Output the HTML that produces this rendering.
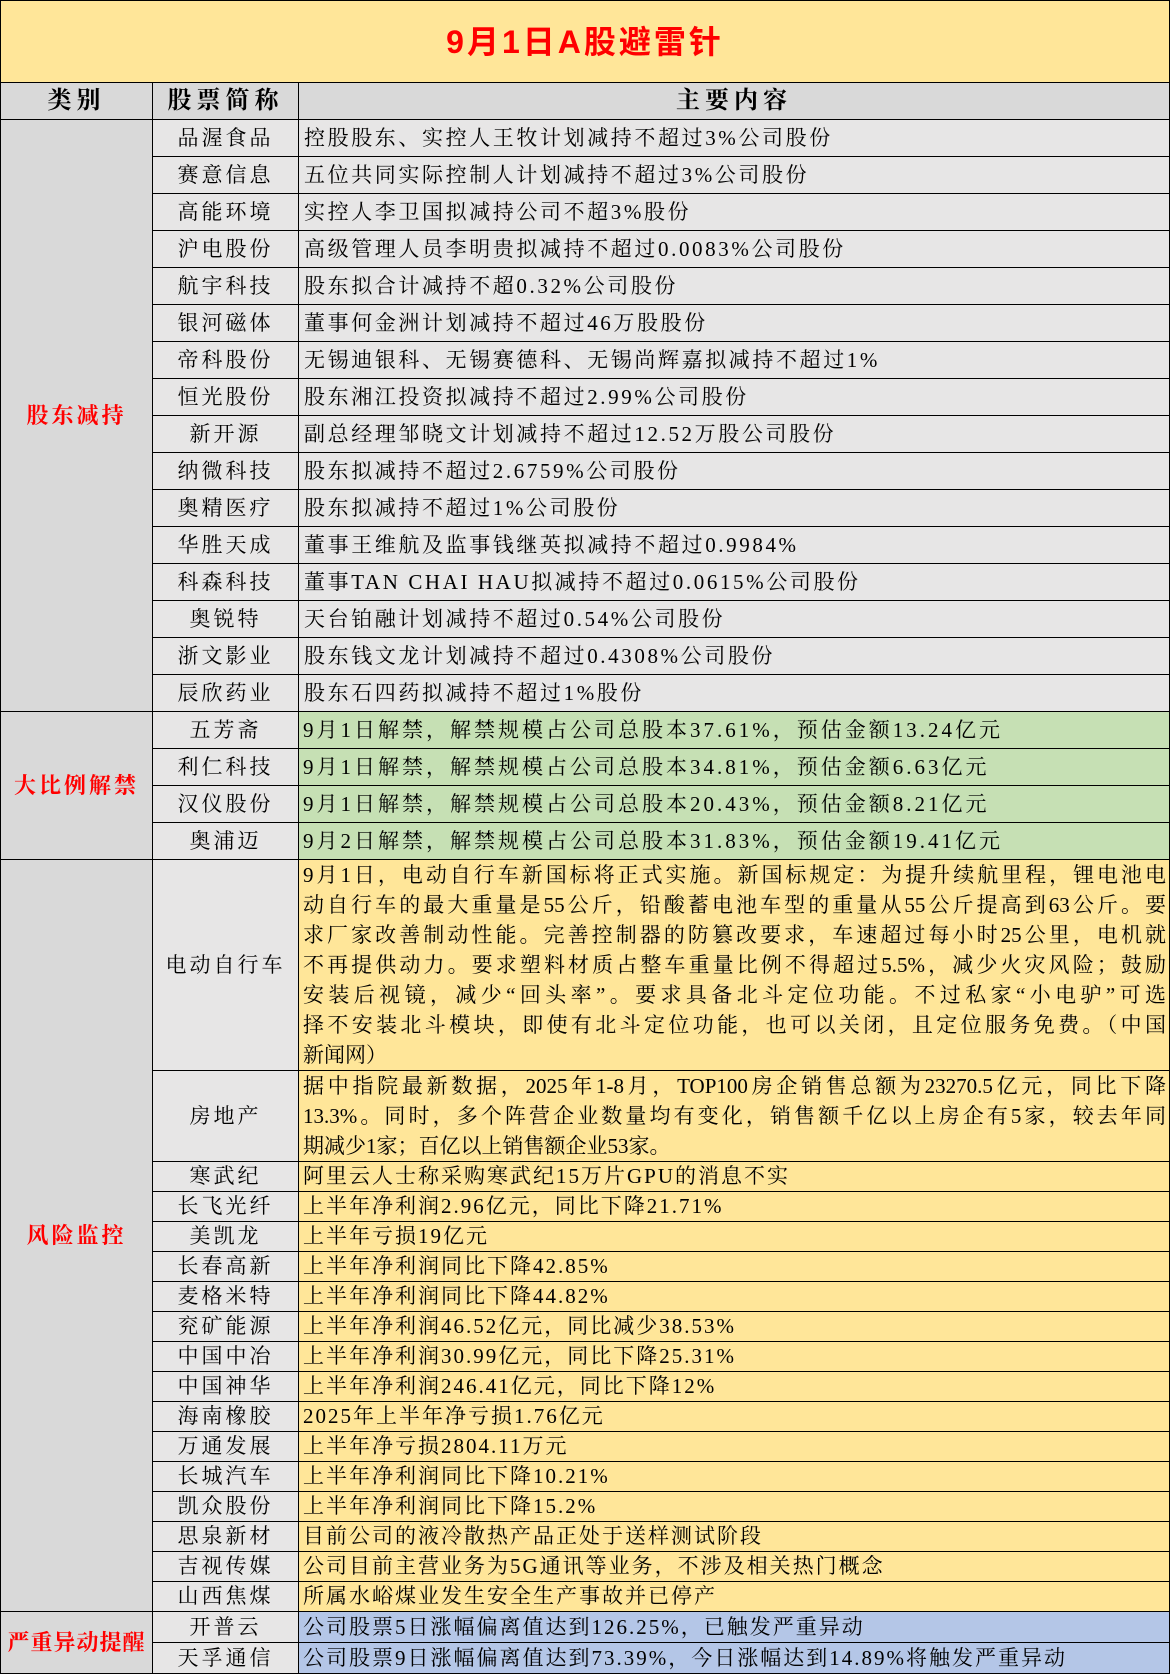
<!DOCTYPE html>
<html><head><meta charset="utf-8"><style>
body{margin:0;width:1170px;height:1672px;overflow:hidden;background:#fff;font-family:"Liberation Serif","Noto Serif CJK SC",serif;}
table{border-collapse:collapse;table-layout:fixed;width:1170px;}
td{border:1.5px solid #000;padding:0;font-size:21px;color:#000;overflow:hidden;white-space:nowrap;line-height:1;}
.t{background:#FFE699;color:#FF0000;font-weight:bold;text-align:center;font-size:32px;letter-spacing:3px;font-family:"Liberation Sans","Noto Sans CJK SC",sans-serif;}
.h{background:#D9D9D9;font-weight:bold;text-align:center;font-size:24px;letter-spacing:5px;}
.c{background:#D9D9D9;color:#FF0000;font-weight:bold;text-align:center;font-size:22px;letter-spacing:3px;}
.n{background:#E7E6E6;text-align:center;letter-spacing:3px;}
.g{background:#E7E6E6;padding-left:5px;letter-spacing:2.6px;}
.gr{background:#C6E0B4;padding-left:4px;letter-spacing:3px;}
.y{background:#FFE699;padding-left:4px;letter-spacing:2px;}
.b{background:#B4C6E7;padding-left:4px;letter-spacing:2px;}
.p{vertical-align:top;padding:0 3px 0 4px;letter-spacing:0;}
.p div{height:30px;line-height:30px;text-align:justify;text-align-last:justify;white-space:nowrap;}
.p div.l{text-align-last:left;}
.r1 td{height:36px}
.r2 td{height:29px}
.r3 td{height:30px}
</style></head><body>
<table>
<colgroup><col style="width:152px"><col style="width:146px"><col></colgroup>
<tr><td colspan="3" class="t" style="height:81px">9月1日A股避雷针</td></tr>
<tr><td class="h" style="height:36px">类别</td><td class="h">股票简称</td><td class="h">主要内容</td></tr>
<tr class="r1"><td class="c" rowspan="16">股东减持</td><td class="n">品渥食品</td><td class="g">控股股东、实控人王牧计划减持不超过3%公司股份</td></tr>
<tr class="r1"><td class="n">赛意信息</td><td class="g">五位共同实际控制人计划减持不超过3%公司股份</td></tr>
<tr class="r1"><td class="n">高能环境</td><td class="g">实控人李卫国拟减持公司不超3%股份</td></tr>
<tr class="r1"><td class="n">沪电股份</td><td class="g">高级管理人员李明贵拟减持不超过0.0083%公司股份</td></tr>
<tr class="r1"><td class="n">航宇科技</td><td class="g">股东拟合计减持不超0.32%公司股份</td></tr>
<tr class="r1"><td class="n">银河磁体</td><td class="g">董事何金洲计划减持不超过46万股股份</td></tr>
<tr class="r1"><td class="n">帝科股份</td><td class="g">无锡迪银科、无锡赛德科、无锡尚辉嘉拟减持不超过1%</td></tr>
<tr class="r1"><td class="n">恒光股份</td><td class="g">股东湘江投资拟减持不超过2.99%公司股份</td></tr>
<tr class="r1"><td class="n">新开源</td><td class="g">副总经理邹晓文计划减持不超过12.52万股公司股份</td></tr>
<tr class="r1"><td class="n">纳微科技</td><td class="g">股东拟减持不超过2.6759%公司股份</td></tr>
<tr class="r1"><td class="n">奥精医疗</td><td class="g">股东拟减持不超过1%公司股份</td></tr>
<tr class="r1"><td class="n">华胜天成</td><td class="g">董事王维航及监事钱继英拟减持不超过0.9984%</td></tr>
<tr class="r1"><td class="n">科森科技</td><td class="g">董事TAN CHAI HAU拟减持不超过0.0615%公司股份</td></tr>
<tr class="r1"><td class="n">奥锐特</td><td class="g">天台铂融计划减持不超过0.54%公司股份</td></tr>
<tr class="r1"><td class="n">浙文影业</td><td class="g">股东钱文龙计划减持不超过0.4308%公司股份</td></tr>
<tr class="r1"><td class="n">辰欣药业</td><td class="g">股东石四药拟减持不超过1%股份</td></tr>
<tr class="r1"><td class="c" rowspan="4">大比例解禁</td><td class="n">五芳斋</td><td class="gr">9月1日解禁，解禁规模占公司总股本37.61%，预估金额13.24亿元</td></tr>
<tr class="r1"><td class="n">利仁科技</td><td class="gr">9月1日解禁，解禁规模占公司总股本34.81%，预估金额6.63亿元</td></tr>
<tr class="r1"><td class="n">汉仪股份</td><td class="gr">9月1日解禁，解禁规模占公司总股本20.43%，预估金额8.21亿元</td></tr>
<tr class="r1"><td class="n">奥浦迈</td><td class="gr">9月2日解禁，解禁规模占公司总股本31.83%，预估金额19.41亿元</td></tr>
<tr><td class="c" rowspan="17">风险监控</td><td class="n" style="height:209px">电动自行车</td><td class="y p">
<div>9月1日，电动自行车新国标将正式实施。新国标规定：为提升续航里程，锂电池电</div>
<div>动自行车的最大重量是55公斤，铅酸蓄电池车型的重量从55公斤提高到63公斤。要</div>
<div>求厂家改善制动性能。完善控制器的防篡改要求，车速超过每小时25公里，电机就</div>
<div>不再提供动力。要求塑料材质占整车重量比例不得超过5.5%，减少火灾风险；鼓励</div>
<div>安装后视镜，减少“回头率”。要求具备北斗定位功能。不过私家“小电驴”可选</div>
<div>择不安装北斗模块，即使有北斗定位功能，也可以关闭，且定位服务免费。（中国</div>
<div class="l">新闻网）</div></td></tr>
<tr><td class="n" style="height:88px">房地产</td><td class="y p">
<div>据中指院最新数据，2025年1-8月，TOP100房企销售总额为23270.5亿元，同比下降</div>
<div>13.3%。同时，多个阵营企业数量均有变化，销售额千亿以上房企有5家，较去年同</div>
<div class="l">期减少1家；百亿以上销售额企业53家。</div></td></tr>
<tr class="r2"><td class="n">寒武纪</td><td class="y">阿里云人士称采购寒武纪15万片GPU的消息不实</td></tr>
<tr class="r2"><td class="n">长飞光纤</td><td class="y">上半年净利润2.96亿元，同比下降21.71%</td></tr>
<tr class="r2"><td class="n">美凯龙</td><td class="y">上半年亏损19亿元</td></tr>
<tr class="r2"><td class="n">长春高新</td><td class="y">上半年净利润同比下降42.85%</td></tr>
<tr class="r2"><td class="n">麦格米特</td><td class="y">上半年净利润同比下降44.82%</td></tr>
<tr class="r2"><td class="n">兖矿能源</td><td class="y">上半年净利润46.52亿元，同比减少38.53%</td></tr>
<tr class="r2"><td class="n">中国中冶</td><td class="y">上半年净利润30.99亿元，同比下降25.31%</td></tr>
<tr class="r2"><td class="n">中国神华</td><td class="y">上半年净利润246.41亿元，同比下降12%</td></tr>
<tr class="r2"><td class="n">海南橡胶</td><td class="y">2025年上半年净亏损1.76亿元</td></tr>
<tr class="r2"><td class="n">万通发展</td><td class="y">上半年净亏损2804.11万元</td></tr>
<tr class="r2"><td class="n">长城汽车</td><td class="y">上半年净利润同比下降10.21%</td></tr>
<tr class="r2"><td class="n">凯众股份</td><td class="y">上半年净利润同比下降15.2%</td></tr>
<tr class="r2"><td class="n">思泉新材</td><td class="y">目前公司的液冷散热产品正处于送样测试阶段</td></tr>
<tr class="r2"><td class="n">吉视传媒</td><td class="y">公司目前主营业务为5G通讯等业务，不涉及相关热门概念</td></tr>
<tr class="r2"><td class="n">山西焦煤</td><td class="y">所属水峪煤业发生安全生产事故并已停产</td></tr>
<tr class="r3"><td class="c" rowspan="2" style="letter-spacing:1px">严重异动提醒</td><td class="n">开普云</td><td class="b">公司股票5日涨幅偏离值达到126.25%，已触发严重异动</td></tr>
<tr class="r3"><td class="n">天孚通信</td><td class="b">公司股票9日涨幅偏离值达到73.39%，今日涨幅达到14.89%将触发严重异动</td></tr>
</table>
</body></html>
